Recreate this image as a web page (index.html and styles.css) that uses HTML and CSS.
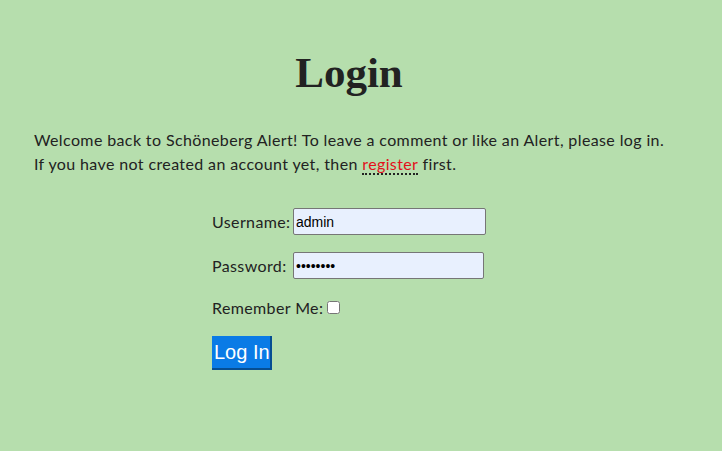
FILE: index.html
```html
<!DOCTYPE html>
<html lang="en">
<head>
<meta charset="utf-8">
<title>Login</title>
<link rel="stylesheet" href="styles.css">
</head>
<body>
<main class="page">
  <h1 class="title">Login</h1>
  <p class="intro">Welcome back to Schöneberg Alert! To leave a comment or like an Alert, please log in.<br>If you have not created an account yet, then <a class="link" href="#">register</a> first.</p>
  <form class="login-form">
    <p class="row"><label class="label-field" for="u">Username:</label> <input class="field field-user" id="u" type="text" value="admin"></p>
    <p class="row row-pass"><label class="label-field" for="p">Password:</label> <input class="field field-pass" id="p" type="password" value="password"></p>
    <p class="row row-last"><label for="r">Remember Me:</label> <input class="check" id="r" type="checkbox"></p>
    <button class="submit" type="button">Log In</button>
  </form>
</main>
</body>
</html>
```
FILE: styles.css
```css
html, body {
  margin: 0;
  padding: 0;
  background: #b6dead;
}
body {
  font-family: Lato, "Noto Sans", sans-serif;
  font-size: 16px;
  letter-spacing: 0.38px;
  color: #222;
}
.page {
  padding: 45px 58px 0 34px;
}
.title {
  font-family: "Liberation Serif", "DejaVu Serif", serif;
  font-weight: 700;
  font-size: 43px;
  line-height: 56px;
  letter-spacing: 0;
  text-align: center;
  margin: 0 0 27px;
}
.intro {
  margin: 0;
  line-height: 24px;
  white-space: nowrap;
}
.link {
  color: #e3101b;
  text-decoration: none;
  border-bottom: 2px dotted #222;
}
.login-form {
  width: fit-content;
  margin: 32px auto 0;
}
.row {
  margin: 0 0 17px;
  display: flex;
  align-items: center;
  gap: 3px;
  height: 27px;
}
.row-pass {
  margin-bottom: 15px;
}
.row-last {
  margin-bottom: 15px;
}
.label-field {
  width: 78px;
}
.field {
  box-sizing: border-box;
  font-family: "Liberation Sans", Arial, sans-serif;
  font-size: 14px;
  letter-spacing: 0;
  height: 27px;
  padding: 1px 2px;
  margin: 0;
  border: 1px solid #767676;
  border-radius: 2px;
  background: #e8f0fe;
  color: #000;
}
.field-user {
  width: 193px;
}
.field-pass {
  width: 191px;
}
.check {
  margin: 0 0 0 1px;
  width: 13px;
  height: 13px;
}
.submit {
  box-sizing: border-box;
  font-family: "Liberation Sans", Arial, sans-serif;
  font-size: 20px;
  line-height: 23px;
  letter-spacing: 0;
  color: #fff;
  background: #0a7be6;
  border: 2px outset #0a7be6;
  border-top: 0;
  border-left: 0;
  height: 34px;
  width: 60px;
  padding: 5px 0 4px 2px;
  margin: 0;
  text-align: left;
}
```
